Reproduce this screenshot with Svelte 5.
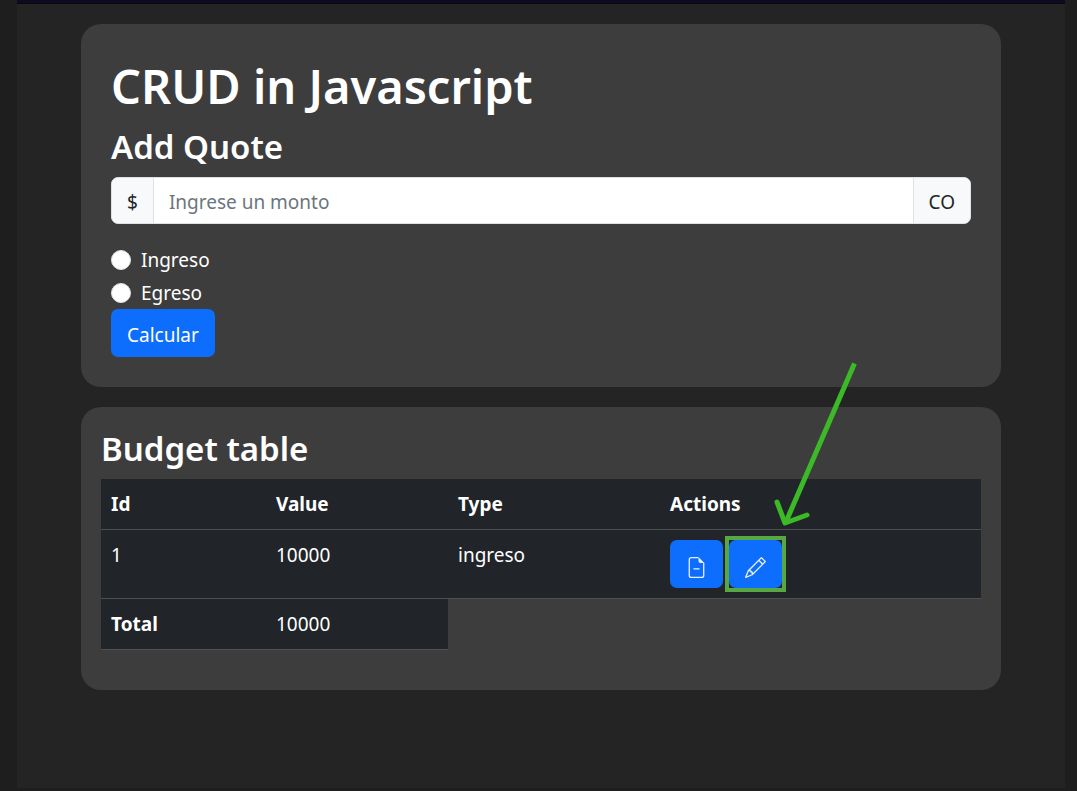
<script>
  let amount = $state('');
  let kind = $state('');
  const entries = [{ id: 1, value: 10000, type: 'ingreso' }];
  const total = entries.reduce((sum, entry) => sum + entry.value, 0);
</script>

<div class="frame">
  <header class="topbar"></header>
  <main>
    <section class="card form-card">
      <h1>CRUD in Javascript</h1>
      <h2>Add Quote</h2>
      <form onsubmit={(event) => event.preventDefault()}>
        <div class="input-group">
          <label class="addon" for="amount">$</label>
          <input id="amount" type="text" placeholder="Ingrese un monto" bind:value={amount} />
          <span class="addon end">CO</span>
        </div>
        <label class="check">
          <input type="radio" name="kind" value="ingreso" bind:group={kind} />
          <span>Ingreso</span>
        </label>
        <label class="check">
          <input type="radio" name="kind" value="egreso" bind:group={kind} />
          <span>Egreso</span>
        </label>
        <button class="btn" type="submit">Calcular</button>
      </form>
    </section>

    <section class="card table-card">
      <h2>Budget table</h2>
      <table>
        <colgroup>
          <col class="c-id" />
          <col class="c-value" />
          <col class="c-type" />
          <col class="c-actions" />
        </colgroup>
        <thead>
          <tr><th>Id</th><th>Value</th><th>Type</th><th>Actions</th></tr>
        </thead>
        <tbody>
          {#each entries as entry (entry.id)}
            <tr>
              <td>{entry.id}</td>
              <td>{entry.value}</td>
              <td>{entry.type}</td>
              <td>
                <div class="actions">
                  <button class="btn icon" type="button" aria-label="Delete">
                    <svg viewBox="0 0 16 16" fill="currentColor">
                      <path d="M5.5 9a.5.5 0 0 1 .5-.5h4a.5.5 0 0 1 0 1H6a.5.5 0 0 1-.5-.5z" />
                      <path d="M4 0h5.500v1H4a1 1 0 0 0-1 1v12a1 1 0 0 0 1 1h8a1 1 0 0 0 1-1V4.500h1V14a2 2 0 0 1-2 2H4a2 2 0 0 1-2-2V2a2 2 0 0 1 2-2z" />
                      <path d="M9.500 3V0L14 4.500h-3A1.500 1.500 0 0 1 9.500 3z" />
                    </svg>
                  </button>
                  <div class="marked">
                    <button class="btn icon" type="button" aria-label="Edit">
                      <svg viewBox="0 0 16 16" fill="currentColor">
                        <path d="M12.146.146a.5.5 0 0 1 .708 0l3 3a.5.5 0 0 1 0 .708l-10 10a.5.5 0 0 1-.168.11l-5 2a.5.5 0 0 1-.65-.65l2-5a.5.5 0 0 1 .11-.168l10-10zM11.207 2.500 13.500 4.793 14.793 3.500 12.500 1.207 11.207 2.500zm1.586 3L10.500 3.207 4 9.707V10h.5a.5.5 0 0 1 .5.5v.5h.5a.5.5 0 0 1 .5.5v.5h.293l6.500-6.500zm-9.761 5.175-.106.106-1.528 3.821 3.821-1.528.106-.106A.5.5 0 0 1 5 12.500V12h-.5a.5.5 0 0 1-.5-.5V11h-.5a.5.5 0 0 1-.468-.325z" />
                      </svg>
                    </button>
                    <svg class="arrow" viewBox="0 0 84 166" aria-hidden="true">
                      <path d="M79.500 2.500 10.500 162" />
                      <path class="head" d="M2 141 10 162 32 154" />
                    </svg>
                  </div>
                </div>
              </td>
            </tr>
          {/each}
        </tbody>
        <tfoot>
          <tr><th>Total</th><td>{total}</td></tr>
        </tfoot>
      </table>
    </section>
  </main>
</div>

<style>
  :global(body) {
    margin: 0;
    background: #1e1e1e;
  }
  .frame, .frame * {
    box-sizing: border-box;
  }
  .frame {
    min-height: calc(100vh - 3px);
    margin: 0 12px 3px 17px;
    background: #242424;
    color: #fff;
    font: 400 19px/30px "Segoe UI", "Noto Sans", sans-serif;
  }
  .topbar {
    height: 4px;
    background: #0e0b20;
    border-bottom: 1px solid #080612;
  }
  main {
    display: flex;
    flex-direction: column;
    gap: 20px;
    padding: 20px 64px;
  }
  .card {
    background: #3d3d3d;
    border-radius: 20px;
  }
  .form-card {
    padding: 30px;
  }
  .table-card {
    padding: 21px 20px 40px;
  }
  h1, h2 {
    margin: 0;
    font-weight: 600;
  }
  h1 {
    margin-bottom: 8px;
    font-size: 47px;
    line-height: 64px;
  }
  h2 {
    margin-bottom: 9px;
    font-size: 33px;
    line-height: 42px;
  }
  .input-group {
    display: flex;
    height: 47px;
    margin-bottom: 19px;
    border: 1px solid #dee2e6;
    border-radius: 7px;
    background: #fff;
    overflow: hidden;
  }
  .addon {
    padding: 9px 15px;
    background: #f8f9fa;
    color: #212529;
    line-height: 30px;
    border-right: 1px solid #dee2e6;
  }
  .addon.end {
    border-right: 0;
    border-left: 1px solid #dee2e6;
  }
  .input-group input {
    flex: 1;
    min-width: 0;
    padding: 2px 15px 0;
    border: 0;
    outline: 0;
    font: inherit;
    color: #212529;
    background: #fff;
  }
  .input-group input::placeholder {
    color: #6c757d;
    opacity: 1;
  }
  .check {
    display: flex;
    align-items: center;
    gap: 10px;
    height: 33px;
  }
  .check input {
    appearance: none;
    width: 20px;
    height: 20px;
    margin: 0;
    border: 1px solid #dee2e6;
    border-radius: 50%;
    background: #fff;
  }
  .check input:checked {
    border: 6px solid #0d6efd;
  }
  .btn {
    display: block;
    height: 48px;
    padding: 3px 16px 0;
    border: 0;
    border-radius: 7px;
    background: #0d6efd;
    color: #fff;
    font: inherit;
  }
  table {
    width: 100%;
    table-layout: fixed;
    border-collapse: collapse;
  }
  .c-id {
    width: 165px;
  }
  .c-value {
    width: 182px;
  }
  .c-type {
    width: 212px;
  }
  .c-actions {
    width: 321px;
  }
  th, td {
    padding: 10px;
    background: #212529;
    border-bottom: 1px solid #4d5154;
    text-align: left;
    vertical-align: top;
  }
  th {
    font-weight: 700;
  }
  .actions {
    display: flex;
    gap: 6px;
  }
  .icon {
    width: 53px;
    padding: 7px 16px 0;
  }
  .icon svg {
    display: block;
    width: 21px;
    height: 21px;
    opacity: 0.9;
  }
  .marked {
    position: relative;
    outline: 4px solid #57a845;
  }
  .arrow {
    position: absolute;
    left: 46px;
    bottom: 61px;
    width: 84px;
    height: 166px;
    overflow: visible;
    pointer-events: none;
  }
  .arrow path {
    fill: none;
    stroke: #3cb927;
    stroke-width: 5;
  }
  .arrow .head {
    stroke-linecap: round;
    stroke-linejoin: round;
  }
</style>
